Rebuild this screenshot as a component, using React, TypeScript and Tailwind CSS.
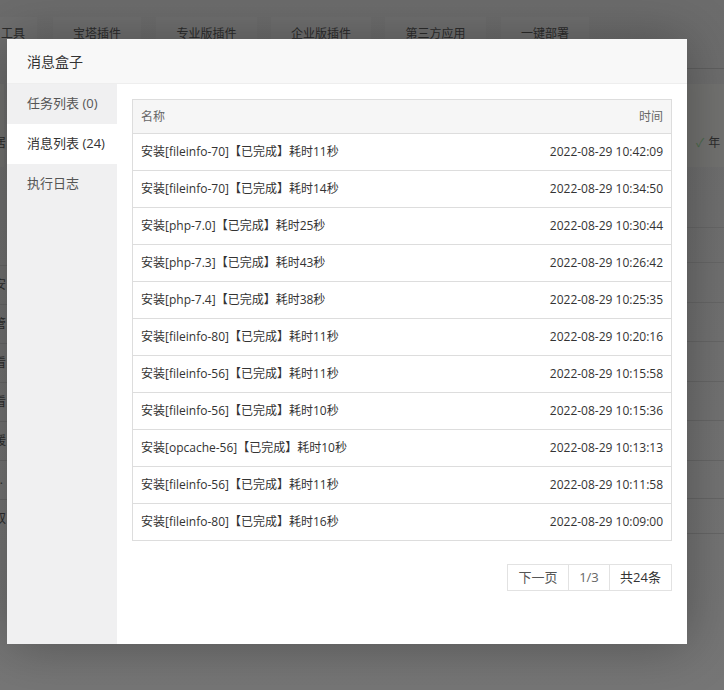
const rows = [
  ["安装[fileinfo-70]【已完成】耗时11秒", "2022-08-29 10:42:09"],
  ["安装[fileinfo-70]【已完成】耗时14秒", "2022-08-29 10:34:50"],
  ["安装[php-7.0]【已完成】耗时25秒", "2022-08-29 10:30:44"],
  ["安装[php-7.3]【已完成】耗时43秒", "2022-08-29 10:26:42"],
  ["安装[php-7.4]【已完成】耗时38秒", "2022-08-29 10:25:35"],
  ["安装[fileinfo-80]【已完成】耗时11秒", "2022-08-29 10:20:16"],
  ["安装[fileinfo-56]【已完成】耗时11秒", "2022-08-29 10:15:58"],
  ["安装[fileinfo-56]【已完成】耗时10秒", "2022-08-29 10:15:36"],
  ["安装[opcache-56]【已完成】耗时10秒", "2022-08-29 10:13:13"],
  ["安装[fileinfo-56]【已完成】耗时11秒", "2022-08-29 10:11:58"],
  ["安装[fileinfo-80]【已完成】耗时16秒", "2022-08-29 10:09:00"],
]

const sideRows = ["安", "管", "看", "看", "瑗", "s.", "双"]
const rightLines = [227, 262, 302, 341, 381, 420, 460, 498, 533]

// page behind the modal, dimmed by the shade
function Backdrop() {
  return (
    <div className="absolute inset-0 bg-gradient-to-b from-[#6c6c6c] to-[#767676] text-[12px] text-[#2c2c2c]">
      <div className="flex h-[33px] mt-[17px]">
        <div className="w-[37px] bg-[#6f6f6f] flex items-center justify-end pr-[12px]">工具</div>
        <div className="w-[88px] ml-[16px] bg-[#6f6f6f] flex items-center justify-center">宝塔插件</div>
        <div className="w-[101px] ml-[15px] bg-[#6f6f6f] flex items-center justify-center">专业版插件</div>
        <div className="w-[100px] ml-[14px] bg-[#6f6f6f] flex items-center justify-center">企业版插件</div>
        <div className="w-[101px] ml-[14px] bg-[#6f6f6f] flex items-center justify-center">第三方应用</div>
        <div className="w-[88px] ml-[15px] bg-[#6f6f6f] flex items-center justify-center">一键部署</div>
      </div>
      <div className="absolute right-0 top-[68px] w-[40px] border-t border-[#5f5f5f]" />
      <div className="absolute right-0 top-[84px] w-[40px] h-[83px] bg-[#727270] pt-[50px] pl-[12px] flex items-start">
        <span className="text-[#4d6a4d] mr-[4px] leading-[18px]">✓</span>
        <span className="leading-[18px]">年</span>
      </div>
      {rightLines.map((t) => (
        <div key={t} className="absolute right-0 w-[40px] border-t border-[#666]" style={{ top: t }} />
      ))}
      <div className="absolute left-0 top-[84px] w-[10px] h-[83px] bg-[#727270] pt-[50px] -ml-[6px] leading-[18px]">居</div>
      <div className="absolute left-0 top-[265px] w-[10px] flex flex-col">
        {sideRows.map((s, i) => (
          <div key={i} className="h-[39px] border-t border-[#666] flex items-center -ml-[6px]">{s}</div>
        ))}
      </div>
    </div>
  )
}

export default function App() {
  return (
    <div
      className="relative w-[724px] h-[690px] overflow-hidden"
      style={{ fontFamily: '"Open Sans", "Noto Sans CJK SC", sans-serif' }}
    >
      <Backdrop />
      <div className="absolute left-[7px] top-[39px] w-[680px] h-[605px] bg-white shadow-[1px_1px_50px_rgba(0,0,0,0.3)] flex flex-col">
        <div className="h-[45px] shrink-0 bg-[#f8f8f8] border-b border-[#eee] px-[20px] flex items-center text-[14px] text-[#333]">
          消息盒子
        </div>
        <div className="flex flex-1 min-h-0">
          <div className="w-[110px] bg-[#f0f0f1] flex flex-col text-[13px] text-[#555]">
            <div className="h-[40px] pl-[20px] flex items-center">任务列表 (0)</div>
            <div className="h-[40px] pl-[20px] flex items-center bg-white text-[#333]">消息列表 (24)</div>
            <div className="h-[40px] pl-[20px] flex items-center">执行日志</div>
          </div>
          <div className="flex-1 px-[15px] pt-[15px]">
            <div className="border border-[#ddd] text-[12px]">
              <div className="h-[33px] bg-[#f6f6f6] flex items-center justify-between px-[8px] text-[#666]">
                <span>名称</span>
                <span>时间</span>
              </div>
              {rows.map(([name, time], i) => (
                <div key={i} className="h-[37px] border-t border-[#ddd] flex items-center justify-between px-[8px] text-[#333]">
                  <span>{name}</span>
                  <span>{time}</span>
                </div>
              ))}
            </div>
            <div className="flex justify-end mt-[23px]">
              <div className="flex h-[27px] border border-[#e2e2e2] text-[13px] text-[#333]">
                <div className="w-[60px] flex items-center justify-center text-[#555]">下一页</div>
                <div className="w-[41px] flex items-center justify-center border-l border-[#e2e2e2] text-[#666]">1/3</div>
                <div className="w-[62px] flex items-center justify-center border-l border-[#e2e2e2]">共24条</div>
              </div>
            </div>
          </div>
        </div>
      </div>
    </div>
  )
}
